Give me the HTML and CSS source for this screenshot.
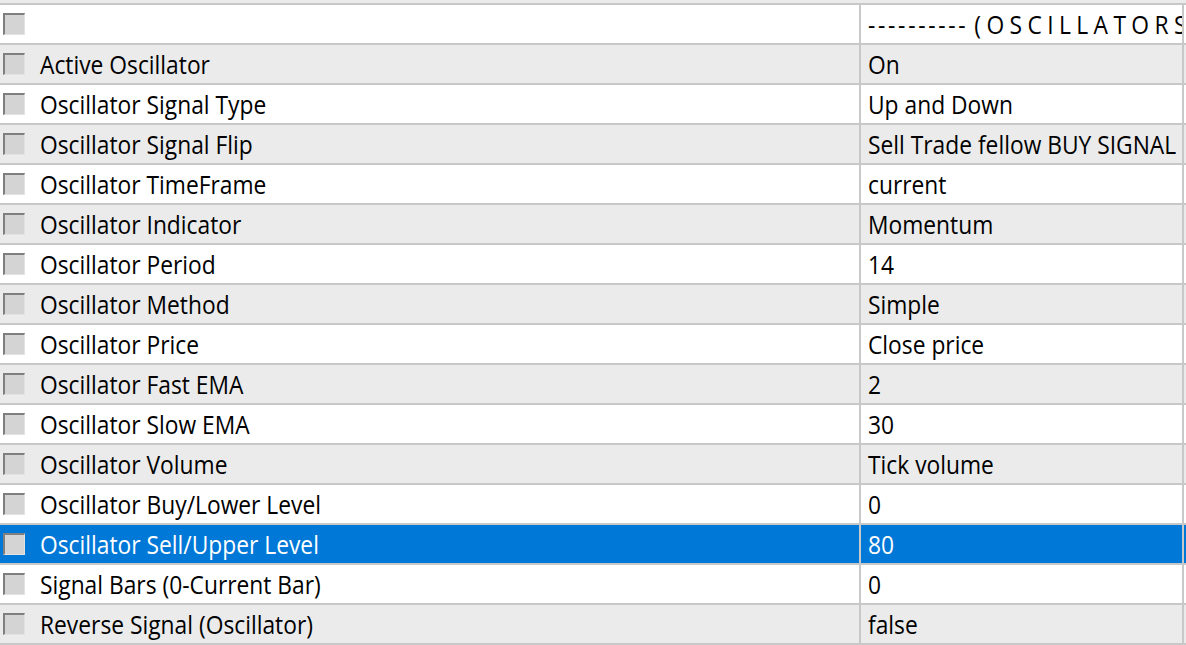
FILE: index.html
```html
<!DOCTYPE html>
<html>
<head>
<meta charset="utf-8">
<link rel="stylesheet" href="styles.css">
</head>
<body>
<div class="grid">
  <div class="strip"></div>
  <div class="row even"><div class="name"><span class="chk"></span><span class="txt"></span></div><div class="val"><span class="txt"><span class="dashes">----------</span> <span class="spaced">(OSCILLATORS)</span> <span class="dashes">----------</span></span></div></div>
  <div class="row odd"><div class="name"><span class="chk"></span><span class="txt">Active Oscillator</span></div><div class="val"><span class="txt">On</span></div></div>
  <div class="row even"><div class="name"><span class="chk"></span><span class="txt">Oscillator Signal Type</span></div><div class="val"><span class="txt">Up and Down</span></div></div>
  <div class="row odd"><div class="name"><span class="chk"></span><span class="txt">Oscillator Signal Flip</span></div><div class="val"><span class="txt">Sell Trade fellow BUY SIGNAL</span></div></div>
  <div class="row even"><div class="name"><span class="chk"></span><span class="txt">Oscillator TimeFrame</span></div><div class="val"><span class="txt">current</span></div></div>
  <div class="row odd"><div class="name"><span class="chk"></span><span class="txt">Oscillator Indicator</span></div><div class="val"><span class="txt">Momentum</span></div></div>
  <div class="row even"><div class="name"><span class="chk"></span><span class="txt">Oscillator Period</span></div><div class="val"><span class="txt">14</span></div></div>
  <div class="row odd"><div class="name"><span class="chk"></span><span class="txt">Oscillator Method</span></div><div class="val"><span class="txt">Simple</span></div></div>
  <div class="row even"><div class="name"><span class="chk"></span><span class="txt">Oscillator Price</span></div><div class="val"><span class="txt">Close price</span></div></div>
  <div class="row odd"><div class="name"><span class="chk"></span><span class="txt">Oscillator Fast EMA</span></div><div class="val"><span class="txt">2</span></div></div>
  <div class="row even"><div class="name"><span class="chk"></span><span class="txt">Oscillator Slow EMA</span></div><div class="val"><span class="txt">30</span></div></div>
  <div class="row odd"><div class="name"><span class="chk"></span><span class="txt">Oscillator Volume</span></div><div class="val"><span class="txt">Tick volume</span></div></div>
  <div class="row even"><div class="name"><span class="chk"></span><span class="txt">Oscillator Buy/Lower Level</span></div><div class="val"><span class="txt">0</span></div></div>
  <div class="row selected"><div class="name"><span class="chk"></span><span class="txt">Oscillator Sell/Upper Level</span></div><div class="val"><span class="txt">80</span></div></div>
  <div class="row even"><div class="name"><span class="chk"></span><span class="txt">Signal Bars (0-Current Bar)</span></div><div class="val"><span class="txt">0</span></div></div>
  <div class="row odd last"><div class="name"><span class="chk"></span><span class="txt">Reverse Signal (Oscillator)</span></div><div class="val"><span class="txt">false</span></div></div>
</div>
</body>
</html>
```
FILE: styles.css
```css
html, body {
  margin: 0;
  padding: 0;
  background: #ffffff;
  overflow: hidden;
}
.grid {
  width: 1186px;
  height: 645px;
  overflow: hidden;
  font-family: "Open Sans", "Noto Sans", sans-serif;
  font-size: 22.8px;
  color: #000;
}
.strip {
  height: 3px;
  background: #ebebeb;
}
.row {
  display: flex;
  height: 38px;
  border-top: 2px solid #c8c8c8;
}
.row.last {
  border-bottom: 2px solid #c8c8c8;
}
.row.odd { background: #ebebeb; }
.row.even { background: #ffffff; }
.row.selected { background: #0078d7; color: #ffffff; }
.name {
  flex: none;
  display: flex;
  align-items: center;
  border-right: 2px solid #c8c8c8;
  box-sizing: border-box;
  width: 861px;
}
.chk {
  flex: none;
  width: 22px;
  height: 22px;
  margin-left: 3px;
  box-sizing: border-box;
  background: #d4d4d4;
  border-top: 2px solid #7f7f7f;
  border-left: 2px solid #7f7f7f;
  border-right: 1px solid #e2e2e2;
  border-bottom: 1px solid #e2e2e2;
}
.name .txt {
  margin-left: 15px;
}
.txt {
  white-space: nowrap;
  line-height: 38px;
  display: inline-block;
  transform: translateY(1px) scaleY(1.1);
}
.val {
  flex: none;
  display: flex;
  align-items: center;
  border-right: 2px solid #c8c8c8;
  box-sizing: border-box;
  width: 323px;
  overflow: hidden;
  padding-left: 7px;
}
.dashes { letter-spacing: 2.7px; }
.spaced { letter-spacing: 5.4px; }
```
